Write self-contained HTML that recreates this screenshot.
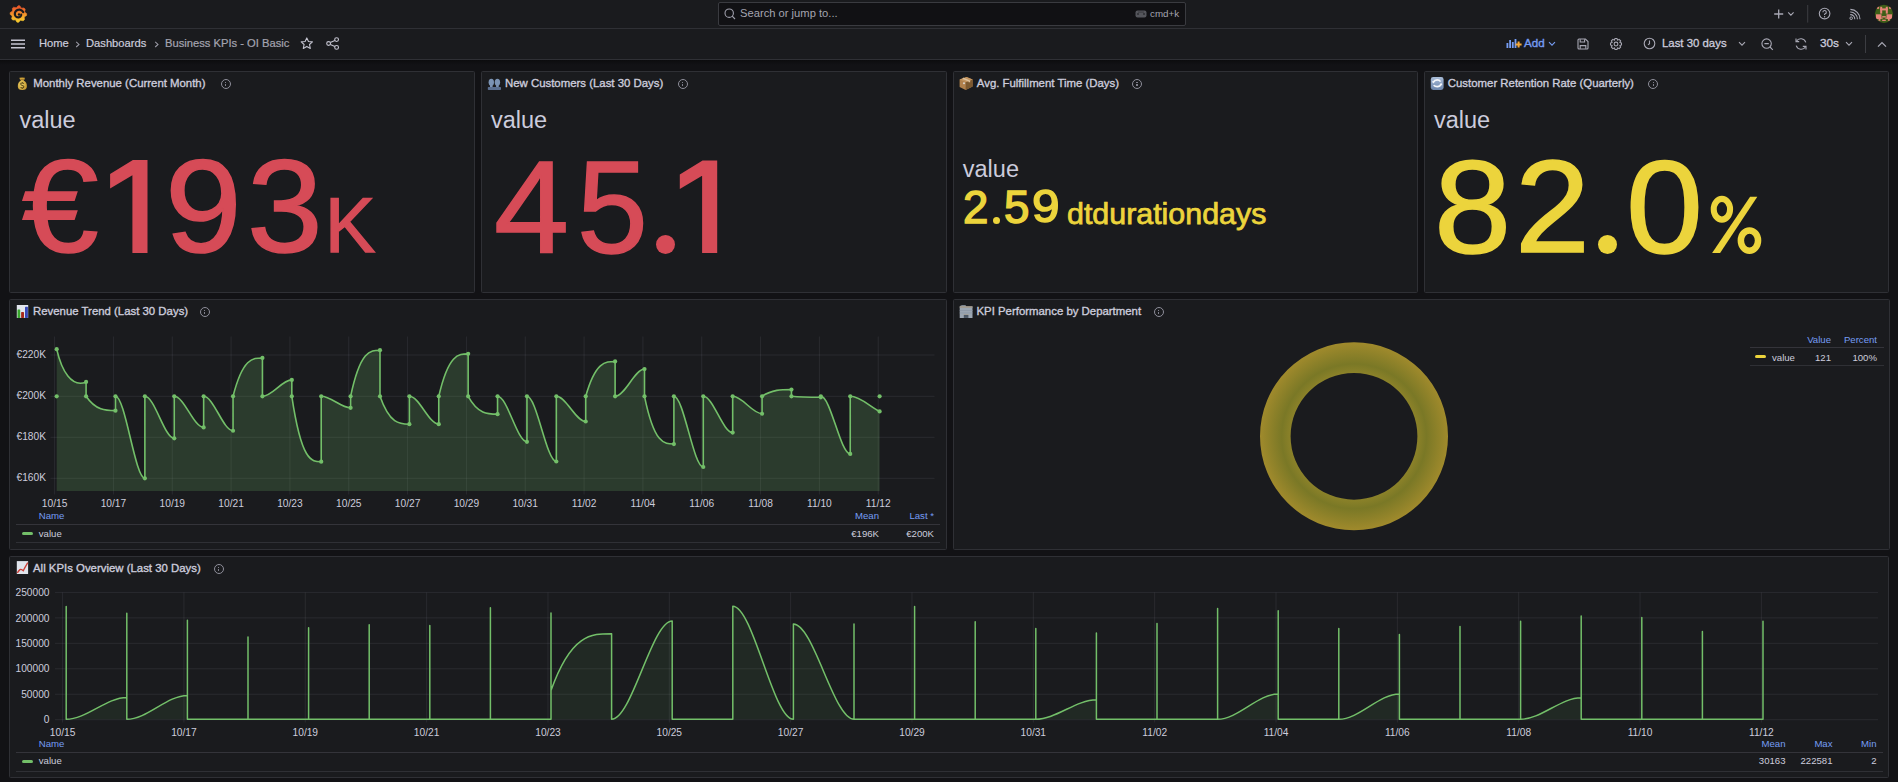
<!DOCTYPE html><html><head><meta charset="utf-8"><style>
*{box-sizing:border-box;margin:0;padding:0}
html,body{width:1898px;height:782px;overflow:hidden;background:#121215;font-family:"Liberation Sans",sans-serif;color:#ccccdc}
.a{position:absolute;white-space:nowrap}
.panel{position:absolute;background:#1a1b1e;border:1px solid #2f3035;border-radius:1.5px}
.pt{position:absolute;font-size:11.4px;color:#ccccdc;-webkit-text-stroke:0.35px #ccccdc;white-space:nowrap;line-height:12px}
.info{position:absolute;width:10px;height:10px;border:1px solid #8e8e9a;border-radius:50%}
.info:before{content:"";position:absolute;left:3.2px;top:2px;width:1.2px;height:1px;background:#80808c}
.info:after{content:"";position:absolute;left:3.2px;top:4px;width:1.2px;height:2.6px;background:#80808c}
.lbl{position:absolute;font-size:23.5px;color:#ccccdc;line-height:1;white-space:nowrap}
.big{position:absolute;line-height:1;white-space:nowrap}
.ax{position:absolute;font-size:10.2px;color:#ccccdc;line-height:10px;white-space:nowrap}
.lg{position:absolute;font-size:9.6px;line-height:10px;white-space:nowrap}
</style></head><body>
<div class="a" style="left:0;top:0;width:1898px;height:28px;background:#1a1b1e"></div>
<div class="a" style="left:0;top:28px;width:1898px;height:1px;background:#2f3035"></div>
<div class="a" style="left:0;top:29px;width:1898px;height:30px;background:#1a1b1e"></div>
<div class="a" style="left:0;top:59px;width:1898px;height:1px;background:#2f3035"></div>
<div class="a" style="left:0;top:60px;width:1898px;height:5px;background:linear-gradient(rgba(0,0,0,0.35),rgba(0,0,0,0))"></div>
<svg class="a" style="left:8px;top:3px" width="22" height="22" viewBox="0 0 22 22">
<defs><linearGradient id="lg1" x1="0" y1="0" x2="0" y2="1"><stop offset="0.1" stop-color="#ec5a2a"/><stop offset="0.5" stop-color="#f2902a"/><stop offset="0.9" stop-color="#f6c62c"/></linearGradient></defs>
<path fill="url(#lg1)" d="M10.11 2.71 L11.84 2.83 L13.30 5.18 L16.06 4.93 L17.20 6.24 L16.56 8.94 L18.69 10.71 L18.57 12.44 L16.22 13.90 L16.47 16.66 L15.16 17.80 L12.46 17.16 L10.69 19.29 L8.96 19.17 L7.50 16.82 L4.74 17.07 L3.60 15.76 L4.24 13.06 L2.11 11.29 L2.23 9.56 L4.58 8.10 L4.33 5.34 L5.64 4.20 L8.34 4.84 Z" stroke="url(#lg1)" stroke-width="0.6" stroke-linejoin="round"/>
<path d="M15.23 9.09 L14.91 8.59 L14.53 8.15 L14.11 7.76 L13.64 7.42 L13.15 7.14 L12.63 6.93 L12.10 6.78 L11.56 6.70 L11.02 6.68 L10.49 6.73 L9.97 6.83 L9.48 7.00 L9.01 7.22 L8.58 7.49 L8.19 7.81 L7.84 8.17 L7.54 8.56 L7.30 8.98 L7.11 9.42 L6.97 9.87 L6.89 10.33 L6.87 10.79 L6.90 11.25 L6.98 11.69 L7.12 12.11 L7.30 12.51 L7.52 12.88 L7.78 13.21 L8.08 13.51 L8.41 13.76 L8.75 13.97 L9.12 14.13 L9.49 14.25 L9.88 14.32 L10.26 14.35 L10.63 14.32 L11.00 14.26 L11.34 14.15 L11.67 14.01 L11.97 13.83 L12.24 13.61 L12.48 13.37 L12.69 13.11 L12.86 12.83 L12.99 12.54 L13.09 12.24 L13.14 11.94 L13.16 11.63" fill="none" stroke="#1a1b1e" stroke-width="2.2" stroke-linecap="round"/>
<circle cx="11.0" cy="11.5" r="1.2" fill="#1a1b1e"/>
</svg>
<div class="a" style="left:718px;top:2px;width:468px;height:24px;background:#111114;border:1px solid #3a3b40;border-radius:2px"></div>
<svg class="a" style="left:724px;top:8px" width="12" height="12" viewBox="0 0 12 12"><circle cx="5.2" cy="5.2" r="4.2" fill="none" stroke="#a0a0ac" stroke-width="1.1"/><path d="M8.2 8.2 L11 11" stroke="#a0a0ac" stroke-width="1.1"/></svg>
<div class="a" style="left:740px;top:7px;font-size:11.2px;line-height:12px;color:#a4a4b0">Search or jump to...</div>
<svg class="a" style="left:1135px;top:10px" width="12" height="8" viewBox="0 0 12 8"><rect x="0.5" y="0.5" width="11" height="7" rx="2" fill="#55565c"/><rect x="2.5" y="3" width="1" height="2" fill="#1a1b1e"/><rect x="8.5" y="3" width="1" height="2" fill="#1a1b1e"/><rect x="3" y="1.6" width="6" height="1" fill="#3a3b40"/></svg>
<div class="a" style="left:1150px;top:8px;font-size:9.8px;line-height:11px;color:#a4a4b0">cmd+k</div>
<svg class="a" style="left:1770px;top:4px" width="125" height="21" viewBox="0 0 125 21">
<path d="M8.7 5.5 V14.5 M4.2 10 H13.2" stroke="#a8a8b4" stroke-width="1.3"/>
<path d="M18.2 8.4 L20.9 11.2 L23.6 8.4" fill="none" stroke="#a8a8b4" stroke-width="1.1"/>
<rect x="37.2" y="1" width="1" height="17.6" fill="#3c3d42"/>
<circle cx="54.6" cy="9.6" r="5.3" fill="none" stroke="#a8a8b4" stroke-width="1.1"/>
<path d="M52.9 8.2 A1.7 1.7 0 1 1 55.2 9.8 L54.6 10.2 V11.1" fill="none" stroke="#a8a8b4" stroke-width="1.1"/><circle cx="54.6" cy="12.8" r="0.7" fill="#a8a8b4"/>
<circle cx="81.2" cy="14.2" r="1.3" fill="none" stroke="#a8a8b4" stroke-width="1"/>
<path d="M80.2 10.6 A4.4 4.4 0 0 1 84.8 15.2 M80.2 8 A7 7 0 0 1 87.4 15.2 M80.4 5.4 A9.6 9.6 0 0 1 90 15.2" fill="none" stroke="#a8a8b4" stroke-width="1.1"/>
</svg>
<svg class="a" style="left:1870px;top:0" width="28" height="28" viewBox="0 0 28 28">
<clipPath id="avc"><circle cx="13.95" cy="13.85" r="9.05"/></clipPath>
<g clip-path="url(#avc)"><rect width="28" height="28" fill="#3f5f18"/>
<g fill="#e8857a"><rect x="10.2" y="6.8" width="2" height="6.8"/><rect x="15.8" y="6.8" width="2" height="6.8"/><rect x="10.2" y="8.4" width="7.6" height="2"/>
<rect x="6.5" y="6.2" width="2.6" height="2.6"/><rect x="19.1" y="6.2" width="2.6" height="2.6"/>
<rect x="6" y="14.3" width="5.5" height="4.7"/><rect x="16.5" y="14.3" width="5.5" height="4.7"/><rect x="8.6" y="19" width="1.8" height="1.8"/><rect x="17.9" y="19" width="1.8" height="1.8"/>
<rect x="12.2" y="16.1" width="3.6" height="1.4"/><rect x="12.2" y="19.7" width="3.6" height="1.3"/><rect x="11.5" y="17.5" width="1" height="1.5"/><rect x="15.5" y="17.5" width="1" height="1.5"/></g></g></svg>
<svg class="a" style="left:10px;top:39px" width="16" height="10" viewBox="0 0 16 10"><path d="M1 1.2 H15 M1 5 H15 M1 8.8 H15" stroke="#c4c4d0" stroke-width="1.4"/></svg>
<div class="a" style="left:39px;top:37px;font-size:11.2px;line-height:12px;color:#ccccdc;-webkit-text-stroke:0.2px #ccccdc">Home</div>
<svg class="a" style="left:74px;top:40px" width="8" height="9" viewBox="0 0 8 9"><path d="M2.2 1.8 L5 4.4 L2.2 7" fill="none" stroke="#9a9aa6" stroke-width="1.05"/></svg>
<div class="a" style="left:86px;top:37px;font-size:11.2px;line-height:12px;color:#ccccdc;-webkit-text-stroke:0.2px #ccccdc">Dashboards</div>
<svg class="a" style="left:152.5px;top:40px" width="8" height="9" viewBox="0 0 8 9"><path d="M2.2 1.8 L5 4.4 L2.2 7" fill="none" stroke="#9a9aa6" stroke-width="1.05"/></svg>
<div class="a" style="left:165px;top:37px;font-size:11.2px;line-height:12px;color:#a4a4b0;-webkit-text-stroke:0.2px #a4a4b0">Business KPIs - OI Basic</div>
<svg class="a" style="left:300px;top:37px" width="14" height="13" viewBox="0 0 14 13"><path d="M6.8 0.9 L8.5 4.5 L12.4 4.9 L9.5 7.5 L10.3 11.4 L6.8 9.4 L3.3 11.4 L4.1 7.5 L1.2 4.9 L5.1 4.5 Z" fill="none" stroke="#c4c4d0" stroke-width="1.1" stroke-linejoin="round"/></svg>
<svg class="a" style="left:326px;top:37px" width="14" height="13" viewBox="0 0 14 13"><circle cx="10.6" cy="2.6" r="1.9" fill="none" stroke="#c4c4d0" stroke-width="1.1"/><circle cx="2.6" cy="6.5" r="1.9" fill="none" stroke="#c4c4d0" stroke-width="1.1"/><circle cx="10.6" cy="10.4" r="1.9" fill="none" stroke="#c4c4d0" stroke-width="1.1"/><path d="M4.3 5.6 L8.9 3.4 M4.3 7.4 L8.9 9.6" stroke="#c4c4d0" stroke-width="1.1"/></svg>
<svg class="a" style="left:1505px;top:37px" width="18" height="12" viewBox="0 0 18 12"><g fill="#769df4"><rect x="1.5" y="6" width="1.8" height="5"/><rect x="4.2" y="3" width="1.8" height="8"/><rect x="6.9" y="5" width="1.8" height="6"/><rect x="9.6" y="2" width="1.8" height="9"/></g><path d="M13.6 4.4 V10.4 M10.6 7.4 H16.6" stroke="#f5a83a" stroke-width="2"/></svg>
<div class="a" style="left:1524px;top:37px;font-size:11.6px;line-height:12px;color:#769df4;-webkit-text-stroke:0.35px #769df4">Add</div>
<svg class="a" style="left:1548px;top:41px" width="8" height="6" viewBox="0 0 8 6"><path d="M1 1.2 L4 4.2 L7 1.2" fill="none" stroke="#769df4" stroke-width="1.1"/></svg>
<svg class="a" style="left:1577px;top:38px" width="12" height="12" viewBox="0 0 12 12"><path d="M1 2 Q1 1 2 1 H8.4 L11 3.6 V10 Q11 11 10 11 H2 Q1 11 1 10 Z" fill="none" stroke="#a8a8b4" stroke-width="1.1"/><path d="M3.2 1.2 V4 H7.6 V1.2 M3.2 10.8 V7.6 H8.8 V10.8" fill="none" stroke="#a8a8b4" stroke-width="1.1"/></svg>
<svg class="a" style="left:1608.6px;top:36.9px" width="14" height="14" viewBox="0 0 14 14"><path d="M5.89 1.51 L8.11 1.51 L8.48 3.07 L8.73 3.17 L10.09 2.33 L11.67 3.91 L10.83 5.27 L10.93 5.52 L12.49 5.89 L12.49 8.11 L10.93 8.48 L10.83 8.73 L11.67 10.09 L10.09 11.67 L8.73 10.83 L8.48 10.93 L8.11 12.49 L5.89 12.49 L5.52 10.93 L5.27 10.83 L3.91 11.67 L2.33 10.09 L3.17 8.73 L3.07 8.48 L1.51 8.11 L1.51 5.89 L3.07 5.52 L3.17 5.27 L2.33 3.91 L3.91 2.33 L5.27 3.17 L5.52 3.07 Z" fill="none" stroke="#a8a8b4" stroke-width="1.05" stroke-linejoin="round"/><circle cx="7" cy="7" r="1.9" fill="none" stroke="#a8a8b4" stroke-width="1.05"/></svg>
<svg class="a" style="left:1643px;top:37px" width="13" height="13" viewBox="0 0 13 13"><circle cx="6.5" cy="6.5" r="5.3" fill="none" stroke="#a8a8b4" stroke-width="1.1"/><path d="M6.5 3.4 V6.8 L5 7.8" fill="none" stroke="#a8a8b4" stroke-width="1.1"/></svg>
<div class="a" style="left:1662px;top:37px;font-size:11.4px;line-height:12px;color:#ccccdc;-webkit-text-stroke:0.3px #ccccdc">Last 30 days</div>
<svg class="a" style="left:1738px;top:41px" width="8" height="6" viewBox="0 0 8 6"><path d="M1 1.2 L4 4.2 L7 1.2" fill="none" stroke="#a8a8b4" stroke-width="1.1"/></svg>
<svg class="a" style="left:1761px;top:38px" width="13" height="13" viewBox="0 0 13 13"><circle cx="5.6" cy="5.6" r="4.7" fill="none" stroke="#a8a8b4" stroke-width="1.1"/><path d="M3.4 5.6 H7.8 M9 9 L11.8 11.8" stroke="#a8a8b4" stroke-width="1.1"/></svg>
<svg class="a" style="left:1794px;top:37px" width="14" height="14" viewBox="0 0 14 14"><path d="M11.8 5.4 A5.2 5.2 0 0 0 2.4 4.2 M2.2 8.6 A5.2 5.2 0 0 0 11.6 9.8" fill="none" stroke="#a8a8b4" stroke-width="1.1"/><path d="M2 1.4 V4.6 H5.2 M12 12.6 V9.4 H8.8" fill="none" stroke="#a8a8b4" stroke-width="1.1"/></svg>
<div class="a" style="left:1820px;top:37px;font-size:11.8px;line-height:12px;color:#ccccdc;-webkit-text-stroke:0.3px #ccccdc">30s</div>
<svg class="a" style="left:1845px;top:41px" width="8" height="6" viewBox="0 0 8 6"><path d="M1 1.2 L4 4.2 L7 1.2" fill="none" stroke="#a8a8b4" stroke-width="1.1"/></svg>
<div class="a" style="left:1865px;top:35px;width:1px;height:18px;background:#3c3d42"></div>
<svg class="a" style="left:1877px;top:41px" width="10" height="7" viewBox="0 0 10 7"><path d="M1 5.6 L5 1.6 L9 5.6" fill="none" stroke="#a8a8b4" stroke-width="1.3"/></svg>
<div class="panel" style="left:9px;top:71px;width:466px;height:222px"></div>
<div class="panel" style="left:481px;top:71px;width:466px;height:222px"></div>
<div class="panel" style="left:953px;top:71px;width:465px;height:222px"></div>
<div class="panel" style="left:1424px;top:71px;width:465px;height:222px"></div>
<div class="panel" style="left:9px;top:299px;width:938px;height:251px"></div>
<div class="panel" style="left:953px;top:299px;width:937px;height:251px"></div>
<div class="panel" style="left:9px;top:556px;width:1880px;height:221.6px"></div>
<svg class="a" style="left:13px;top:74px" width="20" height="18" viewBox="0 0 20 18"><defs><radialGradient id="mb" cx="0.4" cy="0.55" r="0.6"><stop offset="0" stop-color="#ead26a"/><stop offset="1" stop-color="#c4962e"/></radialGradient></defs>
<path d="M6.4 3.8 Q9.1 3.2 11.9 3.8 L11.6 5.2 L10.6 6.6 Q14 8.2 13.9 12.4 Q13.8 15.9 9.3 15.9 Q4.9 15.9 4.8 12.4 Q4.7 8.2 8 6.6 L6.8 5.2 Z" fill="url(#mb)"/>
<path d="M7.2 5.6 H11.2" stroke="#9a7228" stroke-width="0.9"/>
<path d="M10.8 9.6 Q10.2 8.9 9.2 8.9 Q7.7 8.9 7.8 10.2 Q7.9 11.2 9.3 11.4 Q10.9 11.7 10.9 12.8 Q10.9 14 9.3 14 Q8.1 14 7.6 13.3 M9.3 8 V8.9 M9.3 14 V14.9" fill="none" stroke="#5b4718" stroke-width="1.05"/></svg>
<div class="pt" style="left:33.3px;top:77px">Monthly Revenue (Current Month)</div>
<div class="info" style="left:221px;top:78.9px"></div>
<svg class="a" style="left:484px;top:74px" width="20" height="18" viewBox="0 0 20 18"><g fill="#7b93b4"><ellipse cx="7.3" cy="8.3" rx="2.7" ry="3.5"/><ellipse cx="13.4" cy="8.3" rx="2.7" ry="3.5"/><rect x="6" y="10.5" width="2.6" height="3"/><rect x="12.1" y="10.5" width="2.6" height="3"/></g>
<rect x="3.8" y="12.9" width="13.2" height="3.2" rx="0.8" fill="#5b6f90"/></svg>
<div class="pt" style="left:505px;top:77px">New Customers (Last 30 Days)</div>
<div class="info" style="left:677.6px;top:78.9px"></div>
<svg class="a" style="left:956px;top:74px" width="20" height="18" viewBox="0 0 20 18"><path d="M3.6 5.4 L10.6 2.9 L16.6 5.6 L16.6 12.6 L9.6 15.9 L3.6 13 Z" fill="#b0804c"/>
<path d="M9.8 8.3 L16.6 5.6 L16.6 12.6 L9.6 15.9 Z" fill="#7c5930"/>
<path d="M3.6 5.4 L10.6 2.9 L16.6 5.6 L9.8 8.3 Z" fill="#c29460"/>
<path d="M6.8 4.2 L13.4 7 L13.4 8.2" stroke="#dcc09a" stroke-width="1.5" fill="none"/>
<ellipse cx="8" cy="9.2" rx="1.1" ry="1" fill="#d8d0c8"/></svg>
<div class="pt" style="left:976.8px;top:77px">Avg. Fulfillment Time (Days)</div>
<div class="info" style="left:1132.3px;top:78.9px"></div>
<svg class="a" style="left:1427px;top:74px" width="20" height="18" viewBox="0 0 20 18"><defs><linearGradient id="cy" x1="0" y1="0" x2="0" y2="1"><stop offset="0" stop-color="#a9bdd9"/><stop offset="1" stop-color="#6b84aa"/></linearGradient></defs>
<rect x="3.8" y="3" width="12.8" height="12.9" rx="2.4" fill="url(#cy)"/>
<path d="M6.2 8.4 Q7.6 5.9 10.2 5.9 Q12.4 5.9 13.6 7.6" fill="none" stroke="#f4f6fa" stroke-width="1.6"/>
<path d="M14.4 9.8 Q13 12.6 10.2 12.6 Q8 12.6 6.6 11.2" fill="none" stroke="#f4f6fa" stroke-width="1.6"/>
<path d="M5 7.2 L7.8 7.4 L6.2 9.6 Z M15.4 11 L12.6 10.9 L14.2 8.8 Z" fill="#f4f6fa"/></svg>
<div class="pt" style="left:1447.8px;top:77px">Customer Retention Rate (Quarterly)</div>
<div class="info" style="left:1648.4px;top:78.9px"></div>
<svg class="a" style="left:12px;top:302px" width="20" height="18" viewBox="0 0 20 18"><rect x="4.8" y="3" width="11.4" height="12.9" fill="#e2e6ee"/>
<rect x="5.5" y="7.4" width="2.7" height="8.5" rx="0.6" fill="#3aa82e"/><rect x="9.1" y="9.9" width="2.9" height="6" rx="0.6" fill="#a8281a"/><rect x="13" y="4.8" width="2.9" height="11.1" rx="0.6" fill="#3648b8"/></svg>
<div class="pt" style="left:33px;top:305px">Revenue Trend (Last 30 Days)</div>
<div class="info" style="left:200px;top:306.9px"></div>
<svg class="a" style="left:956px;top:302px" width="20" height="18" viewBox="0 0 20 18"><path d="M3.7 4.8 Q4 3.2 6 3.2 H9 Q10 3.2 10.4 4.4 H16.5 V15.9 H3.7 Z" fill="#9ba6b2"/>
<rect x="3.7" y="4.2" width="12.8" height="1.6" fill="#a49a8c"/>
<g fill="#8a96a4"><rect x="3.7" y="8" width="12.8" height="0.7"/><rect x="3.7" y="10.6" width="12.8" height="0.7"/></g>
<rect x="7.8" y="12.6" width="4.6" height="3.3" fill="#4a5664"/><rect x="7.4" y="12.2" width="5.4" height="0.6" fill="#b8ad9c"/></svg>
<div class="pt" style="left:976.5px;top:305px">KPI Performance by Department</div>
<div class="info" style="left:1154px;top:306.9px"></div>
<svg class="a" style="left:12px;top:557px" width="20" height="18" viewBox="0 0 20 18"><rect x="4.8" y="4.1" width="11.3" height="12.9" fill="#e0e4ec"/>
<path d="M5.3 15.9 Q7 13.4 8 12.6 Q9 12 11.3 13.7 Q12.5 11 15.8 5.6" fill="none" stroke="#cc4038" stroke-width="1.35"/></svg>
<div class="pt" style="left:33px;top:562px">All KPIs Overview (Last 30 Days)</div>
<div class="info" style="left:214px;top:563.9px"></div>
<div class="lbl" style="left:19.4px;top:109.1px">value</div>
<div class="lbl" style="left:490.9px;top:109.1px">value</div>
<div class="lbl" style="left:962.8px;top:158.2px">value</div>
<div class="lbl" style="left:1433.9px;top:109.1px">value</div>
<div class="big" style="left:21.80px;top:141.25px;font-size:135px;color:#d64b57;-webkit-text-stroke:1.6px #d64b57;transform:scale(1.0204,0.9754);transform-origin:0 0">€</div>
<svg class="a" style="left:0;top:0" width="1898" height="300"><path d="M110.10 174.10 L132.90 160.00 L147.50 160.00 L147.50 253.00 L132.40 253.00 L132.40 175.20 L110.10 188.50 Z" fill="#d64b57"/></svg>
<div class="big" style="left:164.89px;top:141.25px;font-size:135px;color:#d64b57;-webkit-text-stroke:1.6px #d64b57;transform:scale(1.0217,0.9754);transform-origin:0 0">9</div>
<div class="big" style="left:246.97px;top:141.25px;font-size:135px;color:#d64b57;-webkit-text-stroke:1.6px #d64b57;transform:scale(1.0076,0.9754);transform-origin:0 0">3</div>
<div class="big" style="left:324.61px;top:186.26px;font-size:82px;color:#d64b57;-webkit-text-stroke:1.6px #d64b57;transform:scale(0.9181,0.9590);transform-origin:0 0">K</div>
<div class="big" style="left:494.40px;top:140.71px;font-size:135px;color:#d64b57;-webkit-text-stroke:1.6px #d64b57;transform:scale(0.9986,0.9799);transform-origin:0 0">4</div>
<div class="big" style="left:577.44px;top:141.88px;font-size:135px;color:#d64b57;-webkit-text-stroke:1.6px #d64b57;transform:scale(0.9429,0.9700);transform-origin:0 0">5</div>
<div class="a" style="left:656.15px;top:235.00px;width:19.20px;height:19.20px;border-radius:50%;background:#d64b57"></div>
<svg class="a" style="left:0;top:0" width="1898" height="300"><path d="M679.80 174.60 L702.60 160.50 L717.20 160.50 L717.20 253.00 L702.10 253.00 L702.10 175.70 L679.80 189.00 Z" fill="#d64b57"/></svg>
<div class="big" style="left:1434.26px;top:140.99px;font-size:135px;color:#ecd43c;-webkit-text-stroke:1.6px #ecd43c;transform:scale(1.0279,0.9785);transform-origin:0 0">8</div>
<div class="big" style="left:1514.52px;top:141.03px;font-size:135px;color:#ecd43c;-webkit-text-stroke:1.6px #ecd43c;transform:scale(0.9968,0.9762);transform-origin:0 0">2</div>
<div class="a" style="left:1598.10px;top:235.00px;width:19.20px;height:19.20px;border-radius:50%;background:#ecd43c"></div>
<div class="big" style="left:1625.69px;top:140.99px;font-size:135px;color:#ecd43c;-webkit-text-stroke:1.6px #ecd43c;transform:scale(1.0255,0.9785);transform-origin:0 0">0</div>
<svg class="a" style="left:0;top:0" width="1898" height="300"><path fill-rule="evenodd" d="M1710.70 209.25 A11.2 13.45 0 1 0 1733.10 209.25 A11.2 13.45 0 1 0 1710.70 209.25 Z M1716.75 209.25 A5.15 7.15 0 1 0 1727.05 209.25 A5.15 7.15 0 1 0 1716.75 209.25 Z M1737.60 240.60 A11.85 13.4 0 1 0 1761.30 240.60 A11.85 13.4 0 1 0 1737.60 240.60 Z M1744.10 240.60 A5.35 6.9 0 1 0 1754.80 240.60 A5.35 6.9 0 1 0 1744.10 240.60 Z" fill="#ecd43c"/><path d="M1712.1 252.9 L1720.1 252.9 L1757.3 196.7 L1750.1 196.7 Z" fill="#ecd43c"/></svg>
<div class="big" style="left:963.49px;top:182.55px;font-size:47px;color:#ecd43c;-webkit-text-stroke:1.5px #ecd43c;transform:scale(0.9702,1.0000);transform-origin:0 0">2</div>
<div class="a" style="left:992.60px;top:216.80px;width:7.60px;height:7.60px;border-radius:50%;background:#ecd43c"></div>
<div class="big" style="left:1003.68px;top:182.75px;font-size:47px;color:#ecd43c;-webkit-text-stroke:1.5px #ecd43c;transform:scale(0.9745,1.0000);transform-origin:0 0">5</div>
<div class="big" style="left:1031.88px;top:182.25px;font-size:47px;color:#ecd43c;-webkit-text-stroke:1.5px #ecd43c;transform:scale(1.0553,1.0000);transform-origin:0 0">9</div>
<div class="big" style="left:1066.8px;top:199.3px;font-size:29.6px;color:#ecd43c;-webkit-text-stroke:0.75px #ecd43c;transform:scaleX(1.027);transform-origin:0 0">dtdurationdays</div>
<svg class="a" style="left:0;top:0" width="1898" height="560"><rect x="54.10" y="336.5" width="1" height="158" fill="rgba(204,204,220,0.09)"/><rect x="112.93" y="336.5" width="1" height="158" fill="rgba(204,204,220,0.09)"/><rect x="171.76" y="336.5" width="1" height="158" fill="rgba(204,204,220,0.09)"/><rect x="230.59" y="336.5" width="1" height="158" fill="rgba(204,204,220,0.09)"/><rect x="289.42" y="336.5" width="1" height="158" fill="rgba(204,204,220,0.09)"/><rect x="348.25" y="336.5" width="1" height="158" fill="rgba(204,204,220,0.09)"/><rect x="407.08" y="336.5" width="1" height="158" fill="rgba(204,204,220,0.09)"/><rect x="465.91" y="336.5" width="1" height="158" fill="rgba(204,204,220,0.09)"/><rect x="524.74" y="336.5" width="1" height="158" fill="rgba(204,204,220,0.09)"/><rect x="583.57" y="336.5" width="1" height="158" fill="rgba(204,204,220,0.09)"/><rect x="642.40" y="336.5" width="1" height="158" fill="rgba(204,204,220,0.09)"/><rect x="701.23" y="336.5" width="1" height="158" fill="rgba(204,204,220,0.09)"/><rect x="760.06" y="336.5" width="1" height="158" fill="rgba(204,204,220,0.09)"/><rect x="818.89" y="336.5" width="1" height="158" fill="rgba(204,204,220,0.09)"/><rect x="877.72" y="336.5" width="1" height="158" fill="rgba(204,204,220,0.09)"/><rect x="50.5" y="354.50" width="884" height="1" fill="rgba(204,204,220,0.09)"/><rect x="50.5" y="395.80" width="884" height="1" fill="rgba(204,204,220,0.09)"/><rect x="50.5" y="436.80" width="884" height="1" fill="rgba(204,204,220,0.09)"/><rect x="50.5" y="477.80" width="884" height="1" fill="rgba(204,204,220,0.09)"/><path d="M56.70 349.15 C61.70 371.15 71.70 387.95 86.09 381.95 L86.09 396.30 C95.89 410.65 105.68 410.65 115.48 410.65 L115.48 396.30 C125.28 396.30 135.07 478.30 144.87 478.30 L144.87 396.30 C154.67 396.30 164.46 438.32 174.26 438.32 L174.26 396.30 C184.06 396.30 193.85 427.46 203.65 427.46 L203.65 396.30 C213.45 396.30 223.24 430.74 233.04 430.74 L233.04 396.30 C242.84 357.97 252.63 357.97 262.43 357.97 L262.43 396.30 C272.23 396.30 282.02 379.90 291.82 379.90 L291.82 396.30 C301.62 461.70 311.41 461.70 321.21 461.70 L321.21 396.30 C331.01 396.30 340.80 407.78 350.60 407.78 L350.60 396.30 C360.40 350.18 370.19 350.18 379.99 350.18 L379.99 396.30 C389.79 424.18 399.58 424.18 409.38 424.18 L409.38 396.30 C419.18 396.30 428.97 424.18 438.77 424.18 L438.77 396.30 C448.57 353.87 458.36 353.87 468.16 353.87 L468.16 396.30 C477.96 414.13 487.75 414.13 497.55 414.13 L497.55 396.30 C507.35 396.30 517.14 441.81 526.94 441.81 L526.94 396.30 C536.74 396.30 546.53 461.49 556.33 461.49 L556.33 396.30 C566.13 396.30 575.92 421.52 585.72 421.52 L585.72 396.30 C595.52 361.45 605.31 361.45 615.11 361.45 L615.11 396.30 C624.91 396.30 634.70 369.03 644.50 369.03 L644.50 396.30 C654.30 444.07 664.09 444.07 673.89 444.07 L673.89 396.30 C683.69 396.30 693.48 467.02 703.28 467.02 L703.28 396.30 C713.08 396.30 722.87 432.58 732.67 432.58 L732.67 396.30 C742.47 396.30 752.26 413.73 762.06 413.73 L762.06 396.30 C771.86 389.53 781.65 389.53 791.45 389.53 L791.45 396.30 C801.25 397.32 811.04 397.32 820.84 397.32 L820.84 396.30 C830.64 396.30 840.43 453.90 850.23 453.90 L850.23 396.30 C860.03 396.30 869.82 406.41 879.62 411.47 L879.62 491 L56.70 491 Z" fill="rgba(115,191,105,0.2)"/><path d="M56.70 349.15 C61.70 371.15 71.70 387.95 86.09 381.95 L86.09 396.30 C95.89 410.65 105.68 410.65 115.48 410.65 L115.48 396.30 C125.28 396.30 135.07 478.30 144.87 478.30 L144.87 396.30 C154.67 396.30 164.46 438.32 174.26 438.32 L174.26 396.30 C184.06 396.30 193.85 427.46 203.65 427.46 L203.65 396.30 C213.45 396.30 223.24 430.74 233.04 430.74 L233.04 396.30 C242.84 357.97 252.63 357.97 262.43 357.97 L262.43 396.30 C272.23 396.30 282.02 379.90 291.82 379.90 L291.82 396.30 C301.62 461.70 311.41 461.70 321.21 461.70 L321.21 396.30 C331.01 396.30 340.80 407.78 350.60 407.78 L350.60 396.30 C360.40 350.18 370.19 350.18 379.99 350.18 L379.99 396.30 C389.79 424.18 399.58 424.18 409.38 424.18 L409.38 396.30 C419.18 396.30 428.97 424.18 438.77 424.18 L438.77 396.30 C448.57 353.87 458.36 353.87 468.16 353.87 L468.16 396.30 C477.96 414.13 487.75 414.13 497.55 414.13 L497.55 396.30 C507.35 396.30 517.14 441.81 526.94 441.81 L526.94 396.30 C536.74 396.30 546.53 461.49 556.33 461.49 L556.33 396.30 C566.13 396.30 575.92 421.52 585.72 421.52 L585.72 396.30 C595.52 361.45 605.31 361.45 615.11 361.45 L615.11 396.30 C624.91 396.30 634.70 369.03 644.50 369.03 L644.50 396.30 C654.30 444.07 664.09 444.07 673.89 444.07 L673.89 396.30 C683.69 396.30 693.48 467.02 703.28 467.02 L703.28 396.30 C713.08 396.30 722.87 432.58 732.67 432.58 L732.67 396.30 C742.47 396.30 752.26 413.73 762.06 413.73 L762.06 396.30 C771.86 389.53 781.65 389.53 791.45 389.53 L791.45 396.30 C801.25 397.32 811.04 397.32 820.84 397.32 L820.84 396.30 C830.64 396.30 840.43 453.90 850.23 453.90 L850.23 396.30 C860.03 396.30 869.82 406.41 879.62 411.47" fill="none" stroke="#73bf69" stroke-width="1.6" stroke-linejoin="round"/><circle cx="56.70" cy="349.15" r="2.1" fill="#73bf69"/><circle cx="86.09" cy="381.95" r="2.1" fill="#73bf69"/><circle cx="86.09" cy="396.30" r="2.1" fill="#73bf69"/><circle cx="115.48" cy="410.65" r="2.1" fill="#73bf69"/><circle cx="115.48" cy="396.30" r="2.1" fill="#73bf69"/><circle cx="144.87" cy="478.30" r="2.1" fill="#73bf69"/><circle cx="144.87" cy="396.30" r="2.1" fill="#73bf69"/><circle cx="174.26" cy="438.32" r="2.1" fill="#73bf69"/><circle cx="174.26" cy="396.30" r="2.1" fill="#73bf69"/><circle cx="203.65" cy="427.46" r="2.1" fill="#73bf69"/><circle cx="203.65" cy="396.30" r="2.1" fill="#73bf69"/><circle cx="233.04" cy="430.74" r="2.1" fill="#73bf69"/><circle cx="233.04" cy="396.30" r="2.1" fill="#73bf69"/><circle cx="262.43" cy="357.97" r="2.1" fill="#73bf69"/><circle cx="262.43" cy="396.30" r="2.1" fill="#73bf69"/><circle cx="291.82" cy="379.90" r="2.1" fill="#73bf69"/><circle cx="291.82" cy="396.30" r="2.1" fill="#73bf69"/><circle cx="321.21" cy="461.70" r="2.1" fill="#73bf69"/><circle cx="321.21" cy="396.30" r="2.1" fill="#73bf69"/><circle cx="350.60" cy="407.78" r="2.1" fill="#73bf69"/><circle cx="350.60" cy="396.30" r="2.1" fill="#73bf69"/><circle cx="379.99" cy="350.18" r="2.1" fill="#73bf69"/><circle cx="379.99" cy="396.30" r="2.1" fill="#73bf69"/><circle cx="409.38" cy="424.18" r="2.1" fill="#73bf69"/><circle cx="409.38" cy="396.30" r="2.1" fill="#73bf69"/><circle cx="438.77" cy="424.18" r="2.1" fill="#73bf69"/><circle cx="438.77" cy="396.30" r="2.1" fill="#73bf69"/><circle cx="468.16" cy="353.87" r="2.1" fill="#73bf69"/><circle cx="468.16" cy="396.30" r="2.1" fill="#73bf69"/><circle cx="497.55" cy="414.13" r="2.1" fill="#73bf69"/><circle cx="497.55" cy="396.30" r="2.1" fill="#73bf69"/><circle cx="526.94" cy="441.81" r="2.1" fill="#73bf69"/><circle cx="526.94" cy="396.30" r="2.1" fill="#73bf69"/><circle cx="556.33" cy="461.49" r="2.1" fill="#73bf69"/><circle cx="556.33" cy="396.30" r="2.1" fill="#73bf69"/><circle cx="585.72" cy="421.52" r="2.1" fill="#73bf69"/><circle cx="585.72" cy="396.30" r="2.1" fill="#73bf69"/><circle cx="615.11" cy="361.45" r="2.1" fill="#73bf69"/><circle cx="615.11" cy="396.30" r="2.1" fill="#73bf69"/><circle cx="644.50" cy="369.03" r="2.1" fill="#73bf69"/><circle cx="644.50" cy="396.30" r="2.1" fill="#73bf69"/><circle cx="673.89" cy="444.07" r="2.1" fill="#73bf69"/><circle cx="673.89" cy="396.30" r="2.1" fill="#73bf69"/><circle cx="703.28" cy="467.02" r="2.1" fill="#73bf69"/><circle cx="703.28" cy="396.30" r="2.1" fill="#73bf69"/><circle cx="732.67" cy="432.58" r="2.1" fill="#73bf69"/><circle cx="732.67" cy="396.30" r="2.1" fill="#73bf69"/><circle cx="762.06" cy="413.73" r="2.1" fill="#73bf69"/><circle cx="762.06" cy="396.30" r="2.1" fill="#73bf69"/><circle cx="791.45" cy="389.53" r="2.1" fill="#73bf69"/><circle cx="791.45" cy="396.30" r="2.1" fill="#73bf69"/><circle cx="820.84" cy="397.32" r="2.1" fill="#73bf69"/><circle cx="820.84" cy="396.30" r="2.1" fill="#73bf69"/><circle cx="850.23" cy="453.90" r="2.1" fill="#73bf69"/><circle cx="850.23" cy="396.30" r="2.1" fill="#73bf69"/><circle cx="879.62" cy="411.47" r="2.1" fill="#73bf69"/><circle cx="56.70" cy="396.30" r="2.1" fill="#73bf69"/><circle cx="879.62" cy="396.30" r="2.1" fill="#73bf69"/></svg>
<div class="ax" style="right:1852px;top:349.7px">€220K</div>
<div class="ax" style="right:1852px;top:391.0px">€200K</div>
<div class="ax" style="right:1852px;top:432.0px">€180K</div>
<div class="ax" style="right:1852px;top:473.0px">€160K</div>
<div class="ax" style="left:24.6px;width:60px;text-align:center;top:499px">10/15</div>
<div class="ax" style="left:83.4px;width:60px;text-align:center;top:499px">10/17</div>
<div class="ax" style="left:142.3px;width:60px;text-align:center;top:499px">10/19</div>
<div class="ax" style="left:201.1px;width:60px;text-align:center;top:499px">10/21</div>
<div class="ax" style="left:259.9px;width:60px;text-align:center;top:499px">10/23</div>
<div class="ax" style="left:318.8px;width:60px;text-align:center;top:499px">10/25</div>
<div class="ax" style="left:377.6px;width:60px;text-align:center;top:499px">10/27</div>
<div class="ax" style="left:436.4px;width:60px;text-align:center;top:499px">10/29</div>
<div class="ax" style="left:495.2px;width:60px;text-align:center;top:499px">10/31</div>
<div class="ax" style="left:554.1px;width:60px;text-align:center;top:499px">11/02</div>
<div class="ax" style="left:612.9px;width:60px;text-align:center;top:499px">11/04</div>
<div class="ax" style="left:671.7px;width:60px;text-align:center;top:499px">11/06</div>
<div class="ax" style="left:730.6px;width:60px;text-align:center;top:499px">11/08</div>
<div class="ax" style="left:789.4px;width:60px;text-align:center;top:499px">11/10</div>
<div class="ax" style="left:848.2px;width:60px;text-align:center;top:499px">11/12</div>
<div class="lg" style="left:38.8px;top:510.7px;color:#769df4">Name</div>
<div class="lg" style="left:851px;width:28px;text-align:right;top:510.7px;color:#769df4">Mean</div>
<div class="lg" style="left:894px;width:40px;text-align:right;top:510.7px;color:#769df4">Last *</div>
<div class="a" style="left:16px;top:524px;width:924px;height:1px;background:rgba(204,204,220,0.15)"></div>
<div class="a" style="left:16px;top:542px;width:924px;height:1px;background:rgba(204,204,220,0.12)"></div>
<div class="a" style="left:22px;top:532px;width:11px;height:3px;border-radius:1.5px;background:#73bf69"></div>
<div class="lg" style="left:38.8px;top:528.5px;color:#ccccdc">value</div>
<div class="lg" style="left:840px;width:39px;text-align:right;top:528.5px;color:#ccccdc">€196K</div>
<div class="lg" style="left:894px;width:40px;text-align:right;top:528.5px;color:#ccccdc">€200K</div>
<svg class="a" style="left:0;top:0" width="1898" height="782"><rect x="62.10" y="592.5" width="1" height="130" fill="rgba(204,204,220,0.09)"/><rect x="183.44" y="592.5" width="1" height="130" fill="rgba(204,204,220,0.09)"/><rect x="304.78" y="592.5" width="1" height="130" fill="rgba(204,204,220,0.09)"/><rect x="426.12" y="592.5" width="1" height="130" fill="rgba(204,204,220,0.09)"/><rect x="547.46" y="592.5" width="1" height="130" fill="rgba(204,204,220,0.09)"/><rect x="668.80" y="592.5" width="1" height="130" fill="rgba(204,204,220,0.09)"/><rect x="790.14" y="592.5" width="1" height="130" fill="rgba(204,204,220,0.09)"/><rect x="911.48" y="592.5" width="1" height="130" fill="rgba(204,204,220,0.09)"/><rect x="1032.82" y="592.5" width="1" height="130" fill="rgba(204,204,220,0.09)"/><rect x="1154.16" y="592.5" width="1" height="130" fill="rgba(204,204,220,0.09)"/><rect x="1275.50" y="592.5" width="1" height="130" fill="rgba(204,204,220,0.09)"/><rect x="1396.84" y="592.5" width="1" height="130" fill="rgba(204,204,220,0.09)"/><rect x="1518.18" y="592.5" width="1" height="130" fill="rgba(204,204,220,0.09)"/><rect x="1639.52" y="592.5" width="1" height="130" fill="rgba(204,204,220,0.09)"/><rect x="1760.86" y="592.5" width="1" height="130" fill="rgba(204,204,220,0.09)"/><rect x="55" y="591.90" width="1823" height="1" fill="rgba(204,204,220,0.09)"/><rect x="55" y="617.36" width="1823" height="1" fill="rgba(204,204,220,0.09)"/><rect x="55" y="642.82" width="1823" height="1" fill="rgba(204,204,220,0.09)"/><rect x="55" y="668.28" width="1823" height="1" fill="rgba(204,204,220,0.09)"/><rect x="55" y="693.74" width="1823" height="1" fill="rgba(204,204,220,0.09)"/><rect x="55" y="719.20" width="1823" height="1" fill="rgba(204,204,220,0.09)"/><path d="M66.20 719.3 C86.40 719.30 106.60 697.40 126.80 697.40 L126.80 719.3 Z" fill="rgba(115,191,105,0.09)"/><path d="M126.80 719.3 C147.00 719.30 167.20 695.40 187.40 695.40 L187.40 719.3 Z" fill="rgba(115,191,105,0.09)"/><path d="M551.00 719.3 L551.00 690.5 C571.20 633.70 591.40 633.70 611.60 633.70 L611.60 719.3 Z" fill="rgba(115,191,105,0.09)"/><path d="M611.60 719.3 C631.80 719.30 652.00 621.00 672.20 621.00 L672.20 719.3 Z" fill="rgba(115,191,105,0.09)"/><path d="M732.80 719.3 L732.80 606.2 C753.00 606.20 773.20 719.30 793.40 719.30 Z" fill="rgba(115,191,105,0.09)"/><path d="M793.40 719.3 L793.40 624.1 C813.60 624.10 833.80 719.30 854.00 719.30 Z" fill="rgba(115,191,105,0.09)"/><path d="M1035.80 719.3 C1056.00 719.30 1076.20 699.80 1096.40 699.80 L1096.40 719.3 Z" fill="rgba(115,191,105,0.09)"/><path d="M1217.60 719.3 C1237.80 719.30 1258.00 693.90 1278.20 693.90 L1278.20 719.3 Z" fill="rgba(115,191,105,0.09)"/><path d="M1338.80 719.3 C1359.00 719.30 1379.20 693.90 1399.40 693.90 L1399.40 719.3 Z" fill="rgba(115,191,105,0.09)"/><path d="M1520.60 719.3 C1540.80 719.30 1561.00 697.70 1581.20 697.70 L1581.20 719.3 Z" fill="rgba(115,191,105,0.09)"/><path d="M66.20 719.3 L66.20 606.4 L66.20 719.3 C86.40 719.30 106.60 697.40 126.80 697.40 L126.80 613.2 L126.80 719.3 C147.00 719.30 167.20 695.40 187.40 695.40 L187.40 620.3 L187.40 719.3 L248.00 719.3 L248.00 636.9 L248.00 719.3 L308.60 719.3 L308.60 627.7 L308.60 719.3 L369.20 719.3 L369.20 624.8 L369.20 719.3 L429.80 719.3 L429.80 625.6 L429.80 719.3 L490.40 719.3 L490.40 607.8 L490.40 719.3 L551.00 719.3 L551.00 613.0 L551.00 690.5 C571.20 633.70 591.40 633.70 611.60 633.70 L611.60 719.3 C631.80 719.30 652.00 621.00 672.20 621.00 L672.20 719.3 L732.80 719.3 L732.80 606.2 C753.00 606.20 773.20 719.30 793.40 719.30 L793.40 624.1 C813.60 624.10 833.80 719.30 854.00 719.30 L854.00 624.1 L854.00 719.3 L914.60 719.3 L914.60 606.4 L914.60 719.3 L975.20 719.3 L975.20 621.8 L975.20 719.3 L1035.80 719.3 L1035.80 628.6 L1035.80 719.3 C1056.00 719.30 1076.20 699.80 1096.40 699.80 L1096.40 633.1 L1096.40 719.3 L1157.00 719.3 L1157.00 623.6 L1157.00 719.3 L1217.60 719.3 L1217.60 608.4 L1217.60 719.3 C1237.80 719.30 1258.00 693.90 1278.20 693.90 L1278.20 610.8 L1278.20 719.3 L1338.80 719.3 L1338.80 628.6 L1338.80 719.3 C1359.00 719.30 1379.20 693.90 1399.40 693.90 L1399.40 634.5 L1399.40 719.3 L1460.00 719.3 L1460.00 626.5 L1460.00 719.3 L1520.60 719.3 L1520.60 621.2 L1520.60 719.3 C1540.80 719.30 1561.00 697.70 1581.20 697.70 L1581.20 615.9 L1581.20 719.3 L1641.80 719.3 L1641.80 617.6 L1641.80 719.3 L1702.40 719.3 L1702.40 631.6 L1702.40 719.3 L1763.00 719.3 L1763.00 621.2 L1763.00 719.3" fill="none" stroke="#73bf69" stroke-width="1.5" stroke-linejoin="round"/><defs><radialGradient id="dg" gradientUnits="userSpaceOnUse" cx="1354" cy="436.3" r="94">
<stop offset="0.67" stop-color="#8c8229"/><stop offset="0.77" stop-color="#7a7826"/><stop offset="1" stop-color="#a08a2c"/></radialGradient></defs><path fill="url(#dg)" fill-rule="evenodd" d="M1354 342.3 A94 94 0 1 1 1354 530.3 A94 94 0 1 1 1354 342.3 Z M1354 372.9 A63.4 63.4 0 1 0 1354 499.7 A63.4 63.4 0 1 0 1354 372.9 Z"/></svg>
<div class="ax" style="right:1848.5px;top:588.0px">250000</div>
<div class="ax" style="right:1848.5px;top:613.5px">200000</div>
<div class="ax" style="right:1848.5px;top:638.9px">150000</div>
<div class="ax" style="right:1848.5px;top:664.4px">100000</div>
<div class="ax" style="right:1848.5px;top:689.8px">50000</div>
<div class="ax" style="right:1848.5px;top:715.3px">0</div>
<div class="ax" style="left:32.6px;width:60px;text-align:center;top:728px">10/15</div>
<div class="ax" style="left:153.9px;width:60px;text-align:center;top:728px">10/17</div>
<div class="ax" style="left:275.3px;width:60px;text-align:center;top:728px">10/19</div>
<div class="ax" style="left:396.6px;width:60px;text-align:center;top:728px">10/21</div>
<div class="ax" style="left:518.0px;width:60px;text-align:center;top:728px">10/23</div>
<div class="ax" style="left:639.3px;width:60px;text-align:center;top:728px">10/25</div>
<div class="ax" style="left:760.6px;width:60px;text-align:center;top:728px">10/27</div>
<div class="ax" style="left:882.0px;width:60px;text-align:center;top:728px">10/29</div>
<div class="ax" style="left:1003.3px;width:60px;text-align:center;top:728px">10/31</div>
<div class="ax" style="left:1124.7px;width:60px;text-align:center;top:728px">11/02</div>
<div class="ax" style="left:1246.0px;width:60px;text-align:center;top:728px">11/04</div>
<div class="ax" style="left:1367.3px;width:60px;text-align:center;top:728px">11/06</div>
<div class="ax" style="left:1488.7px;width:60px;text-align:center;top:728px">11/08</div>
<div class="ax" style="left:1610.0px;width:60px;text-align:center;top:728px">11/10</div>
<div class="ax" style="left:1731.4px;width:60px;text-align:center;top:728px">11/12</div>
<div class="lg" style="left:38.8px;top:738.5px;color:#769df4">Name</div>
<div class="lg" style="left:1725.5px;width:60px;text-align:right;top:738.5px;color:#769df4">Mean</div>
<div class="lg" style="left:1772.5px;width:60px;text-align:right;top:738.5px;color:#769df4">Max</div>
<div class="lg" style="left:1816.5px;width:60px;text-align:right;top:738.5px;color:#769df4">Min</div>
<div class="a" style="left:16px;top:752px;width:1867px;height:1px;background:rgba(204,204,220,0.15)"></div>
<div class="a" style="left:16px;top:771px;width:1867px;height:1px;background:rgba(204,204,220,0.12)"></div>
<div class="a" style="left:22px;top:760px;width:11px;height:3px;border-radius:1.5px;background:#73bf69"></div>
<div class="lg" style="left:38.8px;top:756px;color:#ccccdc">value</div>
<div class="lg" style="left:1725.5px;width:60px;text-align:right;top:756px;color:#ccccdc">30163</div>
<div class="lg" style="left:1772.5px;width:60px;text-align:right;top:756px;color:#ccccdc">222581</div>
<div class="lg" style="left:1816.5px;width:60px;text-align:right;top:756px;color:#ccccdc">2</div>
<div class="lg" style="left:1771px;width:60px;text-align:right;top:334.6px;color:#769df4">Value</div>
<div class="lg" style="left:1817px;width:60px;text-align:right;top:334.6px;color:#769df4">Percent</div>
<div class="a" style="left:1750px;top:347px;width:134px;height:1px;background:rgba(204,204,220,0.15)"></div>
<div class="a" style="left:1750px;top:365px;width:134px;height:1px;background:rgba(204,204,220,0.12)"></div>
<div class="a" style="left:1755px;top:355px;width:11px;height:3px;border-radius:1.5px;background:#ecd43c"></div>
<div class="lg" style="left:1772px;top:352.8px;color:#ccccdc">value</div>
<div class="lg" style="left:1771px;width:60px;text-align:right;top:352.8px;color:#ccccdc">121</div>
<div class="lg" style="left:1817px;width:60px;text-align:right;top:352.8px;color:#ccccdc">100%</div>
</body></html>
